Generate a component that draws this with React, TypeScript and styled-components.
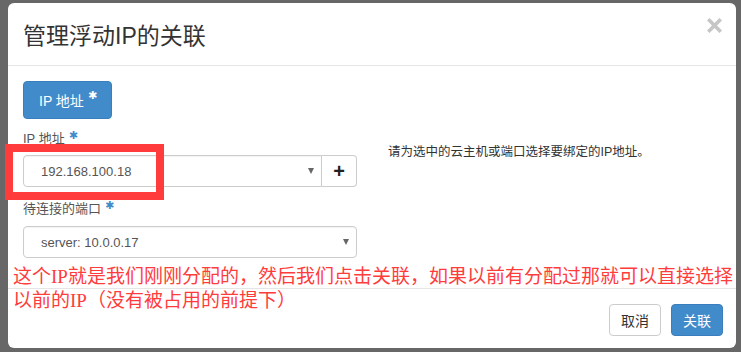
import React from "react";
import styled, { createGlobalStyle } from "styled-components";

const GlobalStyle = createGlobalStyle`
  html, body {
    margin: 0;
    padding: 0;
    background: #666;
  }
  body {
    font-family: "Liberation Sans", "Noto Sans CJK SC", sans-serif;
  }
`;

const Backdrop = styled.div`
  position: relative;
  width: 741px;
  height: 352px;
  box-sizing: border-box;
  padding: 3px 5px 4px 8px;
  background: #676767;
  overflow: hidden;
`;

const Dialog = styled.div`
  display: flex;
  flex-direction: column;
  height: 345px;
  background: #fff;
  border-radius: 6px;
  overflow: hidden;

  & > * {
    flex-shrink: 0;
  }
`;

const Header = styled.div`
  display: flex;
  justify-content: space-between;
  align-items: center;
  height: 62px;
  padding: 0 14px 0 15px;
  border-bottom: 1px solid #e5e5e5;
`;

const Title = styled.h4`
  margin: 0;
  font-size: 23px;
  font-weight: 400;
  color: #333;
`;

const Close = styled.button`
  align-self: flex-start;
  margin-top: 15px;
  padding: 0;
  border: none;
  background: none;
  width: 15px;
  height: 15px;
  cursor: pointer;
`;

const Body = styled.div`
  padding: 15px 15px 30px;
`;

const Button = styled.button<{ $primary?: boolean }>`
  display: inline-flex;
  align-items: center;
  justify-content: center;
  height: 32px;
  padding: 0 11px;
  border-radius: 4px;
  white-space: nowrap;
  font-family: "Liberation Sans", "Noto Sans CJK SC", sans-serif;
  font-size: 14px;
  border: 1px solid ${(p) => (p.$primary ? "#3a7fbd" : "#ccc")};
  background: ${(p) => (p.$primary ? "#428bca" : "#fff")};
  color: ${(p) => (p.$primary ? "#fff" : "#333")};
`;

const TabButton = styled(Button)`
  height: 38px;
  min-width: 87px;
  padding: 0 14px 0 15px;
  justify-content: flex-start;
`;

const Star = styled.span<{ $blue?: boolean }>`
  font-family: "DejaVu Sans", sans-serif;
  font-size: 11px;
  line-height: 0;
  margin-left: 4px;
  position: relative;
  top: -4px;
  color: ${(p) => (p.$blue ? "#428bca" : "inherit")};
`;

const FormRow = styled.div`
  display: grid;
  grid-template-columns: 334px 1fr;
  column-gap: 31px;
  margin-top: 11px;
`;

const FieldLabel = styled.label<{ $gap?: number }>`
  display: block;
  height: 18px;
  font-size: 13px;
  line-height: 18px;
  color: #555;
  margin-bottom: ${(p) => p.$gap ?? 7}px;
`;

const Group = styled.div`
  & + & {
    margin-top: 13px;
  }
`;

const InputGroup = styled.div`
  display: flex;
  height: 32px;
`;

const SelectBox = styled.div<{ $alone?: boolean }>`
  flex: 1;
  display: flex;
  align-items: center;
  justify-content: space-between;
  box-sizing: border-box;
  padding: 0 7px 0 17px;
  border: 1px solid #ccc;
  border-radius: ${(p) => (p.$alone ? "4px" : "4px 0 0 4px")};
  font-size: 13px;
  color: #555;
  box-shadow: inset 0 1px 1px rgba(0, 0, 0, 0.05);
`;

const Caret = styled.span`
  width: 0;
  height: 0;
  border-left: 3.5px solid transparent;
  border-right: 3.5px solid transparent;
  border-top: 6px solid #666;
`;

const Addon = styled.div`
  width: 35px;
  box-sizing: border-box;
  display: flex;
  align-items: center;
  justify-content: center;
  border: 1px solid #ccc;
  border-left: none;
  border-radius: 0 4px 4px 0;
  font-size: 20px;
  font-weight: 700;
  color: #222;
`;

const Help = styled.p`
  margin: 15px 0 0;
  font-size: 12.5px;
  line-height: 14px;
  color: #333;
`;

const Footer = styled.div`
  display: flex;
  justify-content: flex-end;
  gap: 10px;
  padding: 15px 13px 12px 15px;
  border-top: 1px solid #e5e5e5;
`;

const Highlight = styled.div`
  position: absolute;
  left: 5px;
  top: 144px;
  width: 159px;
  height: 56px;
  box-sizing: border-box;
  border: 8px solid #ff3b3b;
`;

const Note = styled.div`
  position: absolute;
  left: 13px;
  top: 265px;
  width: 730px;
  font-family: "Liberation Serif", "Noto Sans CJK SC", serif;
  font-size: 19px;
  line-height: 24px;
  color: #ff3c3c;
  white-space: nowrap;
`;

export default function App() {
  return (
    <Backdrop>
      <GlobalStyle />
      <Dialog>
        <Header>
          <Title>管理浮动IP的关联</Title>
          <Close aria-label="close">
            <svg width="15" height="15" viewBox="0 0 15 15">
              <path d="M2.5 2.5 L12.5 12.5 M12.5 2.5 L2.5 12.5" stroke="#c6c6c6" strokeWidth="3.6" strokeLinecap="square" />
            </svg>
          </Close>
        </Header>
        <Body>
          <TabButton $primary>
            IP 地址<Star>✱</Star>
          </TabButton>
          <FormRow>
            <div>
              <Group>
                <FieldLabel>
                  IP 地址<Star $blue>✱</Star>
                </FieldLabel>
                <InputGroup>
                  <SelectBox>
                    192.168.100.18
                    <Caret />
                  </SelectBox>
                  <Addon>+</Addon>
                </InputGroup>
              </Group>
              <Group>
                <FieldLabel $gap={8}>
                  待连接的端口<Star $blue>✱</Star>
                </FieldLabel>
                <InputGroup>
                  <SelectBox $alone>
                    server: 10.0.0.17
                    <Caret />
                  </SelectBox>
                </InputGroup>
              </Group>
            </div>
            <Help>请为选中的云主机或端口选择要绑定的IP地址。</Help>
          </FormRow>
        </Body>
        <Footer>
          <Button>取消</Button>
          <Button $primary>关联</Button>
        </Footer>
      </Dialog>
      <Highlight />
      <Note>
        这个IP就是我们刚刚分配的，然后我们点击关联，如果以前有分配过那就可以直接选择
        <br />
        以前的IP（没有被占用的前提下）
      </Note>
    </Backdrop>
  );
}
